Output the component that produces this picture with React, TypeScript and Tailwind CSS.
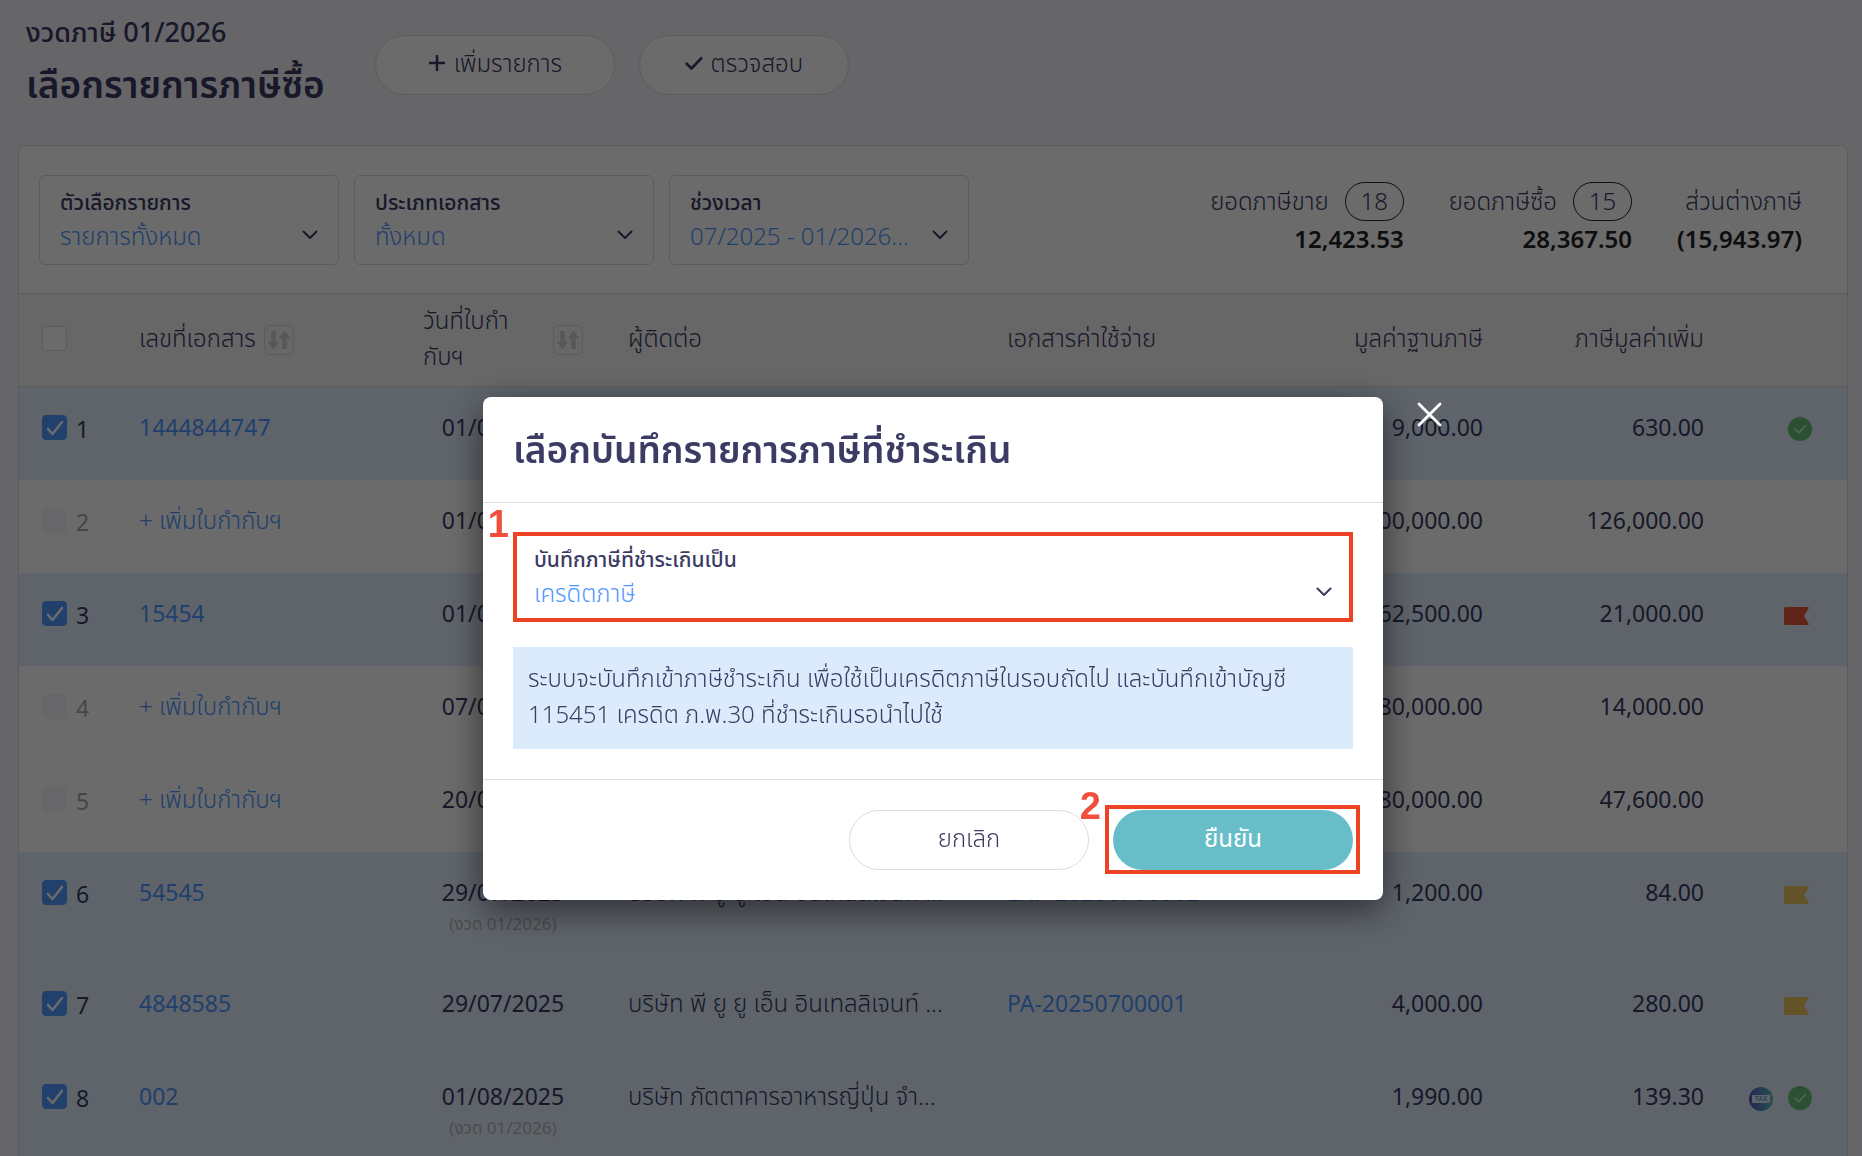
import { useState } from 'react';

const FONT = "font-['Noto_Sans','Noto_Sans_Thai',sans-serif]";

const rows = [
  { id: 1, checked: true, doc: '1444844747', date: '01/07/2025', contact: '', expense: '', base: '9,000.00', vat: '630.00', icons: ['ok'] },
  { id: 2, checked: false, date: '01/07/2025', contact: '', expense: '', base: '1,800,000.00', vat: '126,000.00', icons: [] },
  { id: 3, checked: true, doc: '15454', date: '01/07/2025', contact: '', expense: '', base: '262,500.00', vat: '21,000.00', icons: ['red'] },
  { id: 4, checked: false, date: '07/07/2025', contact: '', expense: '', base: '280,000.00', vat: '14,000.00', icons: [] },
  { id: 5, checked: false, date: '20/07/2025', contact: '', expense: '', base: '680,000.00', vat: '47,600.00', icons: [] },
  { id: 6, checked: true, doc: '54545', date: '29/07/2025', period: '(งวด 01/2026)', contact: 'บริษัท พี ยู ยู เอ็น อินเทลลิเจนท์ ...', expense: 'EXP-20250700002', base: '1,200.00', vat: '84.00', icons: ['yellow'] },
  { id: 7, checked: true, doc: '4848585', date: '29/07/2025', contact: 'บริษัท พี ยู ยู เอ็น อินเทลลิเจนท์ ...', expense: 'PA-20250700001', base: '4,000.00', vat: '280.00', icons: ['yellow'] },
  { id: 8, checked: true, doc: '002', date: '01/08/2025', period: '(งวด 01/2026)', contact: 'บริษัท ภัตตาคารอาหารญี่ปุ่น จำ...', expense: '', base: '1,990.00', vat: '139.30', icons: ['tax', 'ok'] },
];

const Chevron = ({ className = '' }) => (
  <svg viewBox="0 0 16 10" className={`w-4 h-2.5 pointer-events-none ${className}`} fill="none" stroke="#3b3b64" strokeWidth="2" strokeLinecap="round" strokeLinejoin="round">
    <path d="M1.5 1.5 8 8l6.5-6.5" />
  </svg>
);

// Label on top, value and arrow below
const SelectBox = ({ id, label, value, className = '' }) => (
  <div className={`relative h-[90px] px-5 pt-2.5 border border-[#d8d8e6] rounded-md bg-white ${className}`}>
    <label htmlFor={id} className="block text-[21px] leading-8 font-medium">{label}</label>
    <select id={id} className="block w-full h-9 appearance-none bg-transparent text-[24px] leading-9 font-[350] text-[#4d98ff] outline-none">
      <option>{value}</option>
    </select>
    <Chevron className="absolute right-5 bottom-6" />
  </div>
);

const SortButton = () => (
  <button type="button" aria-label="sort" className="shrink-0 w-[30px] h-[30px] border border-[#d8d8d8] rounded-md flex items-center justify-center">
    <svg viewBox="0 0 24 20" className="w-6 h-5" fill="none" stroke="#d0d0d0" strokeWidth="4.5">
      <path d="M6.5 1v13M17.5 19V6" />
      <path d="M1.5 12h10L6.5 19zM12.5 8h10L17.5 1z" fill="#d0d0d0" strokeWidth="1" strokeLinejoin="round" />
    </svg>
  </button>
);

const Checkbox = ({ label, checked = false, disabled = false }) => {
  const [on, setOn] = useState(checked);
  return (
    <span className="relative block w-[25px] h-[25px] shrink-0">
      <input
        type="checkbox"
        aria-label={label}
        checked={on}
        disabled={disabled}
        onChange={() => setOn(!on)}
        className="block w-[25px] h-[25px] appearance-none rounded-[4px] border border-[#d8d8e6] bg-white checked:bg-[#4f98ff] checked:border-[#4f98ff] disabled:bg-[#f6f6fa] disabled:border-[#f6f6fa]"
      />
      {on && (
        <svg viewBox="0 0 25 25" className="absolute inset-0 pointer-events-none" fill="none" stroke="#fff" strokeWidth="2.6" strokeLinecap="round" strokeLinejoin="round">
          <path d="m6 14 4.5 5L20 7" />
        </svg>
      )}
    </span>
  );
};

const StatusIcon = ({ kind }) => {
  if (kind === 'ok') {
    return (
      <svg viewBox="0 0 24 24" className="w-6 h-6">
        <circle cx="12" cy="12" r="12" fill="#69c078" />
        <path d="m7 12 3.8 3.8 6.6-7" fill="none" stroke="#d5ecda" strokeWidth="1.6" strokeLinecap="round" strokeLinejoin="round" />
      </svg>
    );
  }
  if (kind === 'tax') {
    return (
      <svg viewBox="0 0 24 24" className="w-6 h-6 mt-px">
        <defs>
          <linearGradient id="tax" x1="0" x2="1">
            <stop offset="0" stopColor="#5557c8" />
            <stop offset="1" stopColor="#5cc4c4" />
          </linearGradient>
        </defs>
        <circle cx="12" cy="12" r="12" fill="url(#tax)" />
        <rect x="3" y="8" width="18" height="8" rx="1" fill="#e2eeff" />
        <text x="12" y="14.3" textAnchor="middle" fontSize="6.5" fontWeight="700" fontFamily="Liberation Sans" fill="#5f9fc8">TAX</text>
      </svg>
    );
  }
  return (
    <svg viewBox="0 0 25 18" className="w-[25px] h-[18px] mr-[3px] mt-1">
      <path d="M1.5 0H24a.8.8 0 0 1 .7 1.2L20 9l4.7 7.8A.8.8 0 0 1 24 18H1.5A1.5 1.5 0 0 1 0 16.5v-15A1.5 1.5 0 0 1 1.5 0z" fill={kind === 'red' ? '#e85a39' : '#efc45f'} />
    </svg>
  );
};

const Total = ({ label, count = '', amount }) => (
  <div className="flex flex-col items-end">
    <div className="flex items-center gap-4 h-[39px] text-[24px] font-[350]">
      <span className="pb-0.5">{label}</span>
      {count && <span className="h-[39px] w-[59px] pb-0.5 rounded-full border border-[#222] flex items-center justify-center">{count}</span>}
    </div>
    <div className="text-[24px] leading-9 font-semibold text-[#222]">{amount}</div>
  </div>
);

const ConfirmModal = () => (
  <div className="fixed inset-0 z-50 bg-black/58 flex items-start justify-center pl-1 pt-[397px]">
    <div role="dialog" aria-labelledby="modal-title" className="relative w-[900px] rounded-lg bg-white shadow-[0_10px_36px_rgba(0,0,0,0.55)]">
      <button type="button" aria-label="close" className="absolute left-full top-[5px] ml-[34px]">
        <svg viewBox="0 0 25 25" className="w-[25px] h-[25px]" stroke="#fff" strokeWidth="2.8" strokeLinecap="round">
          <path d="M2 2l21 21M23 2 2 23" />
        </svg>
      </button>

      <div className="h-[106px] px-[30px] pb-0.5 flex items-center border-b border-[#dcdcea]">
        <h2 id="modal-title" className="text-[37px] font-semibold">เลือกบันทึกรายการภาษีที่ชำระเกิน</h2>
      </div>

      <div className="px-[30px] pt-[29px] pb-[30px]">
        <div className="relative">
          <SelectBox id="overpaid" label="บันทึกภาษีที่ชำระเกินเป็น" value="เครดิตภาษี" />
          <div className="absolute inset-0 border-4 border-[#ee4225] pointer-events-none" />
          <span className="absolute right-full bottom-full -mb-2.5 mr-1 text-[38px] leading-9 font-bold font-['Liberation_Sans',sans-serif] text-[#ef4f3c]">1</span>
        </div>
        <p className="mt-[25px] px-[15px] pt-[13px] pb-[17px] bg-[#dcebfc] text-[24px] leading-9 font-[350]">
          ระบบจะบันทึกเข้าภาษีชำระเกิน เพื่อใช้เป็นเครดิตภาษีในรอบถัดไป และบันทึกเข้าบัญชี
          <br />
          115451 เครดิต ภ.พ.30 ที่ชำระเกินรอนำไปใช้
        </p>
      </div>

      <div className="px-[30px] py-[30px] flex justify-end gap-6 border-t border-[#dcdcea]">
        <button type="button" className="w-60 h-[60px] pb-1 rounded-full border border-[#dcdcea] text-[24px] font-[350]">ยกเลิก</button>
        <div className="relative">
          <button type="button" className="w-60 h-[60px] pb-1 rounded-full bg-[#67bec9] text-white text-[24px] font-normal">ยืนยัน</button>
          <div className="absolute -left-2 -right-[7px] -top-[5px] -bottom-1 border-4 border-[#ee4225] pointer-events-none" />
          <span className="absolute right-full bottom-full -mb-3.5 mr-3 text-[38px] leading-9 font-bold font-['Liberation_Sans',sans-serif] text-[#ef4f3c]">2</span>
        </div>
      </div>
    </div>
  </div>
);

const App = () => {
  return (
    <div className={`h-screen overflow-hidden bg-[#f2f2f8] text-[#3b3b64] ${FONT}`}>
      {/* Header */}
      <header className="h-[145px] px-[26px] flex items-start">
        <div className="pt-3">
          <p className="text-[27px] leading-10 font-medium">งวดภาษี 01/2026</p>
          <h1 className="text-[37px] leading-[64px] font-semibold">เลือกรายการภาษีซื้อ</h1>
        </div>
        <div className="ml-[50px] mt-[35px] flex gap-6 text-[24px] font-[350]">
          <button type="button" className="w-60 h-[60px] pb-1 rounded-full border border-[#dcdcea] bg-white flex items-center justify-center gap-2">
            <svg viewBox="0 0 18 18" className="w-[18px] h-[18px]" stroke="#3b3b64" strokeWidth="2.4"><path d="M9 1v16M1 9h16" /></svg>
            เพิ่มรายการ
          </button>
          <button type="button" className="w-[210px] h-[60px] pb-1 rounded-full border border-[#dcdcea] bg-white flex items-center justify-center gap-2">
            <svg viewBox="0 0 18 14" className="w-[18px] h-3.5" fill="none" stroke="#3b3b64" strokeWidth="2.6"><path d="m1 7 5.5 5.5L17 1.5" /></svg>
            ตรวจสอบ
          </button>
        </div>
      </header>

      <main className="ml-[18px] mr-3.5 border border-[#dcdce2] rounded-lg bg-white overflow-hidden">
        {/* Filters */}
        <div className="h-[147px] pl-5 pr-[45px] pt-[29px] flex justify-between">
          <div className="flex gap-[15px]">
            <SelectBox id="kind" label="ตัวเลือกรายการ" value="รายการทั้งหมด" className="w-[300px]" />
            <SelectBox id="doctype" label="ประเภทเอกสาร" value="ทั้งหมด" className="w-[300px]" />
            <SelectBox id="range" label="ช่วงเวลา" value="07/2025 - 01/2026..." className="w-[300px]" />
          </div>
          <div className="pt-[7px] flex gap-[45px]">
            <Total label="ยอดภาษีขาย" count="18" amount="12,423.53" />
            <Total label="ยอดภาษีซื้อ" count="15" amount="28,367.50" />
            <Total label="ส่วนต่างภาษี" amount="(15,943.97)" />
          </div>
        </div>

        {/* Tax items */}
        <table className="w-full table-fixed text-[23px] leading-9 font-normal">
          <colgroup>
            <col className="w-[100px]" />
            <col className="w-[284px]" />
            <col className="w-[205px]" />
            <col className="w-[379px]" />
            <col />
            <col className="w-[263px]" />
            <col className="w-[221px]" />
            <col className="w-[123px]" />
          </colgroup>
          <thead>
            <tr className="h-[93px] bg-[#f6f6f6] border-y border-[#dcdce2] text-left text-[24px]">
              <th className="pl-[23px] pb-1"><Checkbox label="ทั้งหมด" /></th>
              <th className="px-5 font-[350]">
                <div className="flex items-center gap-2"><span className="pb-1">เลขที่เอกสาร</span> <SortButton /></div>
              </th>
              <th className="pl-5 pr-[25px] font-[350]">
                <div className="flex items-center justify-between"><span className="pb-1">วันที่ใบกำ<br />กับฯ</span> <SortButton /></div>
              </th>
              <th className="px-5 pb-1 font-[350]">ผู้ติดต่อ</th>
              <th className="px-5 pb-1 font-[350]">เอกสารค่าใช้จ่าย</th>
              <th className="px-5 pb-1 font-[350] text-right">มูลค่าฐานภาษี</th>
              <th className="px-5 pb-1 font-[350] text-right">ภาษีมูลค่าเพิ่ม</th>
              <th />
            </tr>
          </thead>
          <tbody>
            {rows.map((row) => (
              <tr key={row.id} className={`align-top ${row.period ? 'h-[111px]' : 'h-[93px]'} ${row.checked ? 'bg-[#e2eeff]' : 'bg-white'}`}>
                <td className="pl-[23px] pt-7">
                  <div className="flex items-start gap-[9px]">
                    <Checkbox label={`${row.id}`} checked={row.checked} disabled={!row.checked} />
                    <span className={row.checked ? 'leading-7' : 'leading-7 text-[#a5a5b4]'}>{row.id}</span>
                  </div>
                </td>
                <td className="px-5 pt-[22px]">
                  <a href="#" className={row.doc ? 'text-[#4d98ff]' : 'text-[24px] font-[350] text-[#4d98ff]'}>{row.doc || '+ เพิ่มใบกำกับฯ'}</a>
                </td>
                <td className="pl-5 pr-[25px] pt-[22px] text-center whitespace-nowrap">
                  {row.date}
                  {row.period && <div className="text-[17px] leading-7 text-[#b4b4b4]">{row.period}</div>}
                </td>
                <td className="px-5 pt-[22px] text-[24px] font-[350] whitespace-nowrap">{row.contact}</td>
                <td className="px-5 pt-[22px] whitespace-nowrap">
                  {row.expense && <a href="#" className="text-[#4d98ff]">{row.expense}</a>}
                </td>
                <td className="px-5 pt-[22px] text-right">{row.base}</td>
                <td className="px-5 pt-[22px] text-right">{row.vat}</td>
                <td className="pr-[35px] pt-[30px]">
                  <div className="flex justify-end gap-[15px]">
                    {row.icons.map((kind) => <StatusIcon key={kind} kind={kind} />)}
                  </div>
                </td>
              </tr>
            ))}
          </tbody>
        </table>
      </main>

      <ConfirmModal />
    </div>
  );
};

export default App;
